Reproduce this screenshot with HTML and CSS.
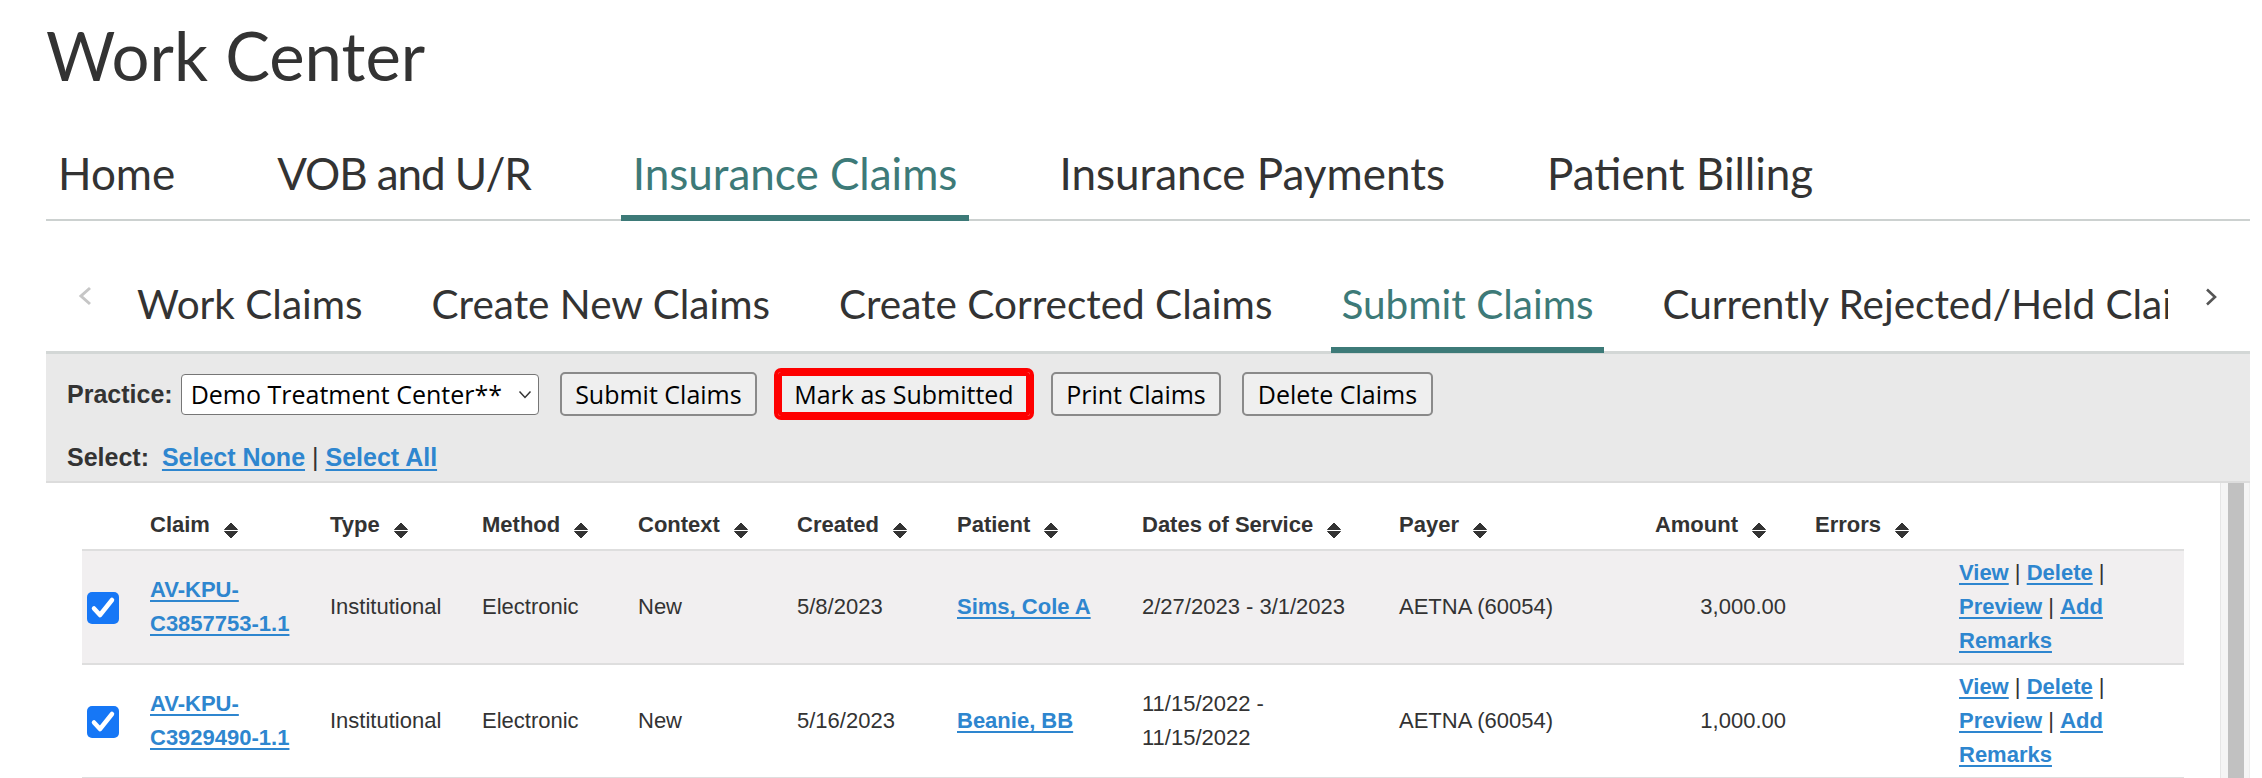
FILE: index.html
```html
<!DOCTYPE html>
<html lang="en">
<head>
<meta charset="utf-8">
<title>Work Center</title>
<link rel="stylesheet" href="styles.css">
</head>
<body>
<div class="page">
  <h1 class="title">Work Center</h1>

  <nav class="mainnav">
    <a class="tab">Home</a>
    <a class="tab tight">VOB and U/R</a>
    <a class="tab active">Insurance Claims</a>
    <a class="tab">Insurance Payments</a>
    <a class="tab">Patient Billing</a>
  </nav>

  <div class="subnav">
    <div class="arrow left">
      <svg width="14" height="20" viewBox="0 0 14 20"><polyline points="12,2 3,10 12,18" fill="none" stroke="#c6c6c6" stroke-width="3"/></svg>
    </div>
    <div class="subtabs">
      <a class="stab">Work Claims</a>
      <a class="stab">Create New Claims</a>
      <a class="stab">Create Corrected Claims</a>
      <a class="stab active">Submit Claims</a>
      <a class="stab">Currently Rejected/Held Claims</a>
    </div>
    <div class="arrow right">
      <svg width="12" height="18" viewBox="0 0 12 18"><polyline points="2,1.5 10,9 2,16.5" fill="none" stroke="#555" stroke-width="2.6"/></svg>
    </div>
  </div>

  <section class="panel">
    <div class="toolbar">
      <span class="lbl">Practice:</span>
      <div class="select">
        <span>Demo Treatment Center**</span>
        <svg width="14" height="9" viewBox="0 0 14 9"><polyline points="1.5,1.5 7,7.5 12.5,1.5" fill="none" stroke="#333" stroke-width="1.5"/></svg>
      </div>
      <button class="btn">Submit Claims</button>
      <button class="btn marked">Mark as Submitted</button>
      <button class="btn">Print Claims</button>
      <button class="btn">Delete Claims</button>
    </div>
    <div class="selectrow">
      <span class="lbl sel">Select:</span>
      <a class="link">Select None</a> <span class="pipe">|</span> <a class="link">Select All</a>
    </div>
  </section>

  <div class="tablewrap">
    <div class="tablearea">
      <table class="claims">
        <colgroup>
          <col class="c-cb"><col class="c-claim"><col class="c-type"><col class="c-method"><col class="c-context"><col class="c-created"><col class="c-patient"><col class="c-dates"><col class="c-payer"><col class="c-amount"><col class="c-errors"><col class="c-actions">
        </colgroup>
        <thead>
          <tr>
            <th></th>
            <th>Claim<svg class="sort" width="16" height="17" viewBox="0 0 16 17"><path d="M1.5 7.5 L8 1 L14.5 7.5 Z M1.5 9.5 L8 16 L14.5 9.5 Z" fill="#333" stroke="#333" stroke-width="1" stroke-linejoin="round"/></svg></th>
            <th>Type<svg class="sort" width="16" height="17" viewBox="0 0 16 17"><path d="M1.5 7.5 L8 1 L14.5 7.5 Z M1.5 9.5 L8 16 L14.5 9.5 Z" fill="#333" stroke="#333" stroke-width="1" stroke-linejoin="round"/></svg></th>
            <th>Method<svg class="sort" width="16" height="17" viewBox="0 0 16 17"><path d="M1.5 7.5 L8 1 L14.5 7.5 Z M1.5 9.5 L8 16 L14.5 9.5 Z" fill="#333" stroke="#333" stroke-width="1" stroke-linejoin="round"/></svg></th>
            <th>Context<svg class="sort" width="16" height="17" viewBox="0 0 16 17"><path d="M1.5 7.5 L8 1 L14.5 7.5 Z M1.5 9.5 L8 16 L14.5 9.5 Z" fill="#333" stroke="#333" stroke-width="1" stroke-linejoin="round"/></svg></th>
            <th>Created<svg class="sort" width="16" height="17" viewBox="0 0 16 17"><path d="M1.5 7.5 L8 1 L14.5 7.5 Z M1.5 9.5 L8 16 L14.5 9.5 Z" fill="#333" stroke="#333" stroke-width="1" stroke-linejoin="round"/></svg></th>
            <th>Patient<svg class="sort" width="16" height="17" viewBox="0 0 16 17"><path d="M1.5 7.5 L8 1 L14.5 7.5 Z M1.5 9.5 L8 16 L14.5 9.5 Z" fill="#333" stroke="#333" stroke-width="1" stroke-linejoin="round"/></svg></th>
            <th>Dates of Service<svg class="sort" width="16" height="17" viewBox="0 0 16 17"><path d="M1.5 7.5 L8 1 L14.5 7.5 Z M1.5 9.5 L8 16 L14.5 9.5 Z" fill="#333" stroke="#333" stroke-width="1" stroke-linejoin="round"/></svg></th>
            <th>Payer<svg class="sort" width="16" height="17" viewBox="0 0 16 17"><path d="M1.5 7.5 L8 1 L14.5 7.5 Z M1.5 9.5 L8 16 L14.5 9.5 Z" fill="#333" stroke="#333" stroke-width="1" stroke-linejoin="round"/></svg></th>
            <th class="num">Amount<svg class="sort" width="16" height="17" viewBox="0 0 16 17"><path d="M1.5 7.5 L8 1 L14.5 7.5 Z M1.5 9.5 L8 16 L14.5 9.5 Z" fill="#333" stroke="#333" stroke-width="1" stroke-linejoin="round"/></svg></th>
            <th>Errors<svg class="sort" width="16" height="17" viewBox="0 0 16 17"><path d="M1.5 7.5 L8 1 L14.5 7.5 Z M1.5 9.5 L8 16 L14.5 9.5 Z" fill="#333" stroke="#333" stroke-width="1" stroke-linejoin="round"/></svg></th>
            <th></th>
          </tr>
        </thead>
        <tbody>
          <tr class="shade">
            <td class="cbcell"><span class="cb"><svg width="32" height="32" viewBox="0 0 32 32"><polyline points="7,16.5 13,23 25,8" fill="none" stroke="#fff" stroke-width="4.5" stroke-linecap="round" stroke-linejoin="round"/></svg></span></td>
            <td><a class="link">AV-KPU-C3857753-1.1</a></td>
            <td>Institutional</td>
            <td>Electronic</td>
            <td>New</td>
            <td>5/8/2023</td>
            <td><a class="link">Sims, Cole A</a></td>
            <td>2/27/2023 - 3/1/2023</td>
            <td>AETNA (60054)</td>
            <td class="num">3,000.00</td>
            <td></td>
            <td><a class="link">View</a> | <a class="link">Delete</a> | <a class="link">Preview</a> | <a class="link">Add</a> <a class="link">Remarks</a></td>
          </tr>
          <tr>
            <td class="cbcell"><span class="cb"><svg width="32" height="32" viewBox="0 0 32 32"><polyline points="7,16.5 13,23 25,8" fill="none" stroke="#fff" stroke-width="4.5" stroke-linecap="round" stroke-linejoin="round"/></svg></span></td>
            <td><a class="link">AV-KPU-C3929490-1.1</a></td>
            <td>Institutional</td>
            <td>Electronic</td>
            <td>New</td>
            <td>5/16/2023</td>
            <td><a class="link">Beanie, BB</a></td>
            <td>11/15/2022 - 11/15/2022</td>
            <td>AETNA (60054)</td>
            <td class="num">1,000.00</td>
            <td></td>
            <td><a class="link">View</a> | <a class="link">Delete</a> | <a class="link">Preview</a> | <a class="link">Add</a> <a class="link">Remarks</a></td>
          </tr>
        </tbody>
      </table>
    </div>
    <div class="scrollbar"><div class="thumb"></div></div>
  </div>
</div>
</body>
</html>
```

FILE: styles.css
```css
html, body {
  margin: 0;
  height: 778px;
  overflow: hidden;
}
body {
  background: #fff;
  color: #333;
  font-family: "Liberation Sans", Arial, sans-serif;
}
.page {
  padding-left: 46px;
  width: 2204px;
}
.title {
  margin: 15px 0 0;
  font: 400 67px/80px Lato, sans-serif;
  color: #333;
}

/* main tabs */
.mainnav {
  display: flex;
  gap: 78px;
  margin-top: 52px;
  border-bottom: 2px solid #ccd1d0;
}
.tab {
  font: 400 44px/52px Lato, sans-serif;
  color: #333;
  padding: 0 12px 16px;
  border-bottom: 6px solid transparent;
  margin-bottom: -2px;
  white-space: nowrap;
}
.tab.tight {
  letter-spacing: -1.1px;
}
.tab.active {
  color: #3d7a78;
  border-bottom-color: #3d7a78;
}

/* sub tabs */
.subnav {
  display: flex;
  margin-top: 59px;
  margin-bottom: -2px;
}
.arrow {
  flex: 0 0 auto;
}
.arrow.left {
  width: 81px;
}
.arrow.left svg {
  margin: 6px 0 0 32px;
  display: block;
}
.arrow.right {
  width: 82px;
}
.arrow.right svg {
  margin: 8px 0 0 37px;
  display: block;
}
.subtabs {
  flex: 0 0 2041px;
  display: flex;
  gap: 49px;
  overflow: hidden;
  white-space: nowrap;
}
.stab {
  flex: 0 0 auto;
  font: 400 40.5px/48px Lato, sans-serif;
  color: #333;
  padding: 0 10px 19px;
  border-bottom: 6px solid transparent;
}
.stab.active {
  color: #3d7a78;
  border-bottom-color: #3d7a78;
}

/* filter panel */
.panel {
  background: #e9e9e9;
  border-top: 3px solid #d3d7d6;
  border-bottom: 2px solid #dcdcdc;
  padding: 18px 21px 7px;
}
.toolbar {
  display: flex;
  align-items: center;
  height: 44px;
  gap: 21px;
}
.lbl {
  font-weight: 700;
  font-size: 25px;
  color: #333;
}
.toolbar .lbl {
  margin-right: -13px;
}
.select {
  box-sizing: border-box;
  width: 358px;
  height: 41px;
  border: 1px solid #767676;
  border-radius: 4px;
  background: #fff;
  display: flex;
  align-items: center;
  justify-content: space-between;
  padding: 0 6px 0 9px;
  font: 400 25px "Open Sans", sans-serif;
  color: #000;
}
.btn {
  box-sizing: border-box;
  height: 44px;
  padding: 0 13.5px;
  border: 2px solid #8a8a8a;
  border-radius: 5px;
  background: #efefef;
  font: 400 25px "Open Sans", sans-serif;
  color: #000;
  white-space: nowrap;
}
.btn.marked {
  border: 4px solid #fe0000;
  outline: 4px solid #fe0000;
  border-radius: 3px;
  padding: 0 12px;
}
.selectrow {
  margin-top: 24px;
  line-height: 34px;
  font-size: 25px;
}
.sel {
  margin-right: 6px;
}
.pipe {
  color: #333;
  font-weight: 400;
}
.link {
  color: #2e86cf;
  font-weight: 700;
  text-decoration: underline;
  text-decoration-thickness: 2px;
  text-underline-offset: 3px;
}

/* table */
.tablewrap {
  display: flex;
  height: 295px;
  background: #fff;
  overflow: hidden;
}
.tablearea {
  flex: 1;
  padding: 18px 0 0 36px;
}
.scrollbar {
  flex: 0 0 16px;
  background: #f5f5f5;
  border-left: 1px solid #e6e6e6;
  border-right: 1px solid #ececec;
  padding: 0 5px 0 7px;
}
.thumb {
  height: 400px;
  background: #c1c1c1;
}
.claims {
  width: 2102px;
  table-layout: fixed;
  border-collapse: separate;
  border-spacing: 0;
  font-size: 22px;
  color: #333;
}
.c-cb { width: 68px; }
.c-claim { width: 180px; }
.c-type { width: 152px; }
.c-method { width: 156px; }
.c-context { width: 159px; }
.c-created { width: 160px; }
.c-patient { width: 185px; }
.c-dates { width: 257px; }
.c-payer { width: 201px; }
.c-amount { width: 215px; }
.c-errors { width: 144px; }
.c-actions { width: 225px; }
.claims th {
  text-align: left;
  font-weight: 700;
  line-height: 34px;
  padding: 7px 30px 7px 0;
  border-bottom: 2px solid #dedede;
  white-space: nowrap;
  vertical-align: middle;
}
.claims th.num {
  text-align: right;
  padding-right: 48px;
}
.sort {
  margin-left: 13px;
  vertical-align: -7px;
}
.claims td {
  line-height: 34px;
  padding: 5px 30px 5px 0;
  border-bottom: 2px solid #dedede;
  vertical-align: middle;
}
.claims td.num {
  text-align: right;
  padding-right: 29px;
}
.claims tr.shade td {
  background: #f1eff0;
}
.cbcell {
  line-height: 0;
}
.cb {
  display: inline-block;
  width: 32px;
  height: 32px;
  margin-left: 5px;
  border-radius: 5px;
  background: #1677f6;
  vertical-align: middle;
}
.cb svg {
  display: block;
}
```
